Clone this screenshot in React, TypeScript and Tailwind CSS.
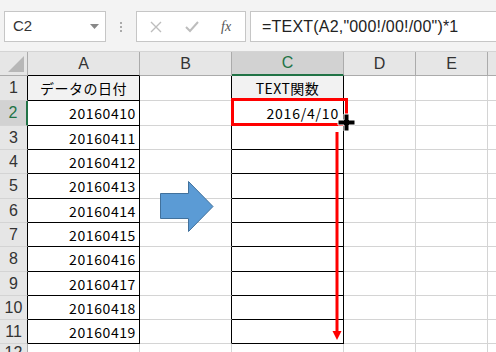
import React from 'react';

const cellFont = { fontFamily: '"Noto Sans CJK JP", "Noto Sans", sans-serif' };
const uiFont = { fontFamily: '"Liberation Sans", "Noto Sans CJK JP", sans-serif' };

const dates = ['20160410', '20160411', '20160412', '20160413', '20160414', '20160415', '20160416', '20160417', '20160418', '20160419'];
// row heights picked to land on the screenshot's grid lines
const rowHeights = ['h-[25px]', 'h-[25px]', 'h-[24px]', 'h-[24px]', 'h-[25px]', 'h-[24px]', 'h-[24px]', 'h-[25px]', 'h-[24px]', 'h-[24px]', 'h-[24px]'];

function Toolbar() {
  return (
    <div className="h-[52px] bg-[#f3f3f3] flex items-start pt-[11px] border-b border-[#d4d4d4]" style={uiFont}>
      <div className="ml-[4px] w-[102px] h-[31px] bg-white border border-[#c6c6c6] flex items-center justify-between pl-[8px] pr-[6px]">
        <span className="text-[15px] text-[#333]">C2</span>
        <svg width="9" height="5" viewBox="0 0 9 5"><path d="M0 0h9L4.5 5z" fill="#888" /></svg>
      </div>
      <div className="w-[30px] h-[31px] flex flex-col items-center justify-center gap-[2px]">
        <span className="w-[2px] h-[2px] bg-[#aaa]" />
        <span className="w-[2px] h-[2px] bg-[#aaa]" />
        <span className="w-[2px] h-[2px] bg-[#aaa]" />
      </div>
      <div className="w-[110px] h-[31px] bg-white border border-[#c6c6c6] flex items-center">
        <svg className="ml-[13px]" width="12" height="12" viewBox="0 0 12 12"><path d="M1 1l10 10M11 1L1 11" stroke="#bdbdbd" strokeWidth="1.4" /></svg>
        <svg className="ml-[23px]" width="14" height="12" viewBox="0 0 14 12"><path d="M1 6l4 4 8-9" stroke="#bdbdbd" strokeWidth="2" fill="none" /></svg>
        <span className="ml-[22px] text-[14px] italic text-[#555]" style={{ fontFamily: '"Liberation Serif", serif' }}>fx</span>
      </div>
      <div className="ml-[4px] flex-1 h-[31px] bg-white border border-r-0 border-[#c6c6c6] flex items-center pl-[11px]">
        <span className="text-[16px] text-[#222] tracking-[0.2px]">=TEXT(A2,"000!/00!/00")*1</span>
      </div>
    </div>
  );
}

function HeaderRow() {
  return (
    <div className="flex h-[24px] bg-[#e6e6e6] text-[16px] text-[#333]" style={uiFont}>
      <div className="w-[28px] shrink-0 border-r border-b border-[#ababab] relative">
        <svg className="absolute right-[3px] bottom-[3px]" width="16" height="16" viewBox="0 0 16 16"><path d="M16 0V16H0z" fill="#b7b7b7" /></svg>
      </div>
      <div className="w-[112px] shrink-0 flex items-center justify-center border-r border-b border-[#ababab] border-b-black">A</div>
      <div className="w-[92px] shrink-0 flex items-center justify-center border-r border-b border-[#ababab]">B</div>
      <div className="w-[112px] shrink-0 flex items-center justify-center border-r border-[#ababab] bg-[#d2d2d2] text-[#217346] border-b-2 border-b-[#217346]">C</div>
      <div className="w-[72px] shrink-0 flex items-center justify-center border-r border-b border-[#ababab]">D</div>
      <div className="w-[72px] shrink-0 flex items-center justify-center border-r border-b border-[#ababab]">E</div>
      <div className="flex-1 border-b border-[#ababab]" />
    </div>
  );
}

function DataRow({ index }: { index: number }) {
  const n = index + 1;
  const selected = n === 2;
  const a = n === 1 ? 'データの日付' : dates[index - 1];
  const c = n === 1 ? 'TEXT関数' : n === 2 ? '2016/4/10' : '';
  return (
    <div className={`flex ${rowHeights[index]}`}>
      <div
        className={`w-[28px] shrink-0 flex items-center justify-center text-[16px] border-b border-[#d4d4d4] ${selected ? 'bg-[#d2d2d2] text-[#217346] border-r-2 border-r-[#217346]' : 'bg-[#e6e6e6] text-[#333] border-r border-r-black'}`}
        style={uiFont}>
        {n}
      </div>
      <div
        className={`w-[112px] shrink-0 flex items-center border-r border-b border-black text-[14px] text-black leading-none ${n === 1 ? 'justify-center bg-[#f2f2f2] tracking-[0.5px]' : 'justify-end pr-[3px] bg-white tracking-[0.6px]'}`}
        style={cellFont}>
        {a}
      </div>
      <div className="w-[92px] shrink-0 border-r border-r-black border-b border-b-[#d4d4d4] bg-white" />
      <div
        className={`w-[112px] shrink-0 flex items-center border-r border-b border-black text-[14px] text-black leading-none ${n === 1 ? 'justify-center bg-[#f2f2f2] tracking-[0.5px]' : 'justify-end pr-[4px] bg-white tracking-[0.8px]'}`}
        style={cellFont}>
        {c}
      </div>
      <div className="w-[72px] shrink-0 border-r border-b border-[#d4d4d4] bg-white" />
      <div className="w-[72px] shrink-0 border-r border-b border-[#d4d4d4] bg-white" />
      <div className="flex-1 border-b border-[#d4d4d4] bg-white" />
    </div>
  );
}

export default function App() {
  return (
    <div className="w-[496px] h-[352px] overflow-hidden relative bg-white">
      <Toolbar />
      <HeaderRow />
      {rowHeights.map((_, i) => (
        <DataRow key={i} index={i} />
      ))}
      <div className="flex h-[24px]">
        <div className="w-[28px] shrink-0 bg-[#e6e6e6] border-r border-[#ababab] flex justify-center text-[16px] text-[#333] leading-[18px]" style={uiFont}>12</div>
        <div className="w-[112px] shrink-0 border-r border-[#d4d4d4]" />
        <div className="w-[92px] shrink-0 border-r border-[#d4d4d4]" />
        <div className="w-[112px] shrink-0 border-r border-[#d4d4d4]" />
        <div className="w-[72px] shrink-0 border-r border-[#d4d4d4]" />
        <div className="w-[72px] shrink-0 border-r border-[#d4d4d4]" />
      </div>

      {/* blue block arrow */}
      <svg className="absolute left-[159px] top-[180px]" width="56" height="53" viewBox="0 0 56 53">
        <path d="M1.5 13.5H29.5V1.5L54 26.5L29.5 51.5V38.5H1.5Z" fill="#5b9bd5" stroke="#41719c" strokeWidth="1" />
      </svg>

      {/* red selection highlight */}
      <div className="absolute left-[231px] top-[98px] w-[117px] h-[28px] border-[3px] border-[#ff0000]" />

      {/* red drag arrow */}
      <svg className="absolute left-[331px] top-[132px]" width="12" height="210" viewBox="0 0 12 210">
        <path d="M6 0V200" stroke="#ff0000" strokeWidth="3" />
        <path d="M1.5 199H10.5L6 208Z" fill="#ff0000" />
      </svg>

      {/* fill handle cursor */}
      <svg className="absolute left-[337px] top-[113px]" width="19" height="19" viewBox="0 0 19 19">
        <path d="M7 1h5v6h6v5h-6v6H7v-6H1V7h6z" fill="#000" stroke="#fff" strokeWidth="1" />
      </svg>
    </div>
  );
}
